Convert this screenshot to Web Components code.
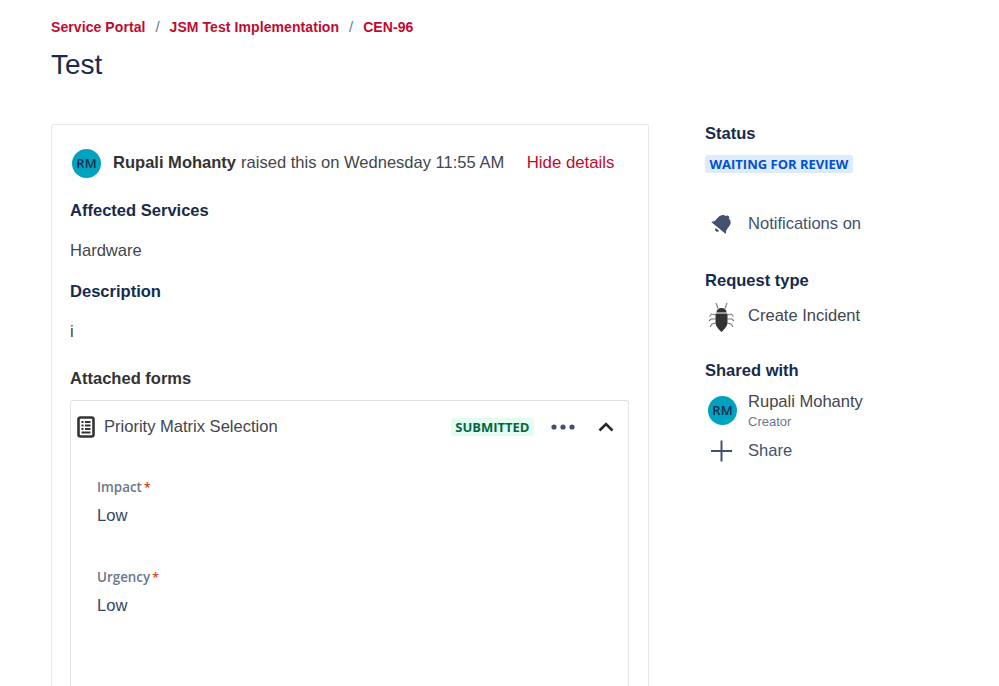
<!DOCTYPE html>
<html>
<head>
<meta charset="utf-8">
<title>Test</title>
<style>
html, body { margin: 0; height: 100%; overflow: hidden; background: #fff; }
body { font-family: "Liberation Sans", Arial, sans-serif; }
</style>
</head>
<body>
<request-page>
  <bread-crumbs slot="crumbs"></bread-crumbs>
  <request-card slot="main">
    <field-block label="Affected Services" value="Hardware"></field-block>
    <field-block label="Description" value="i"></field-block>
    <attached-form></attached-form>
  </request-card>
  <side-panel slot="side"></side-panel>
</request-page>

<script>
const navy = '#172b4d'
const slate = '#42526e'
const crimson = '#bf0a30'
const teal = '#00a3bf'
const bodySize = '16.55px'

class RequestPage extends HTMLElement {
    constructor() {
        super()
        this.attachShadow({mode: 'open'}).innerHTML = `
            <style>
                :host { display: block; padding: 18px 0 0 51px; height: 668px; overflow: hidden; }
                h1 { margin: 0; font: 400 28px/32px "Liberation Sans", sans-serif; color: ${navy}; height: 32px; }
                .title { padding-top: 13px; height: 75px; }
                .columns { display: flex; align-items: flex-start; }
                .main { width: 598px; flex: none; }
                .side { margin-left: 56px; width: 240px; }
            </style>
            <slot name="crumbs"></slot>
            <div class="title"><h1>Test</h1></div>
            <div class="columns">
                <div class="main"><slot name="main"></slot></div>
                <div class="side"><slot name="side"></slot></div>
            </div>
        `
    }
}

class BreadCrumbs extends HTMLElement {
    constructor() {
        super()
        this.attachShadow({mode: 'open'}).innerHTML = `
            <style>
                :host { display: flex; height: 18px; align-items: center; font: 700 14px/18px "Liberation Sans", sans-serif; color: ${crimson}; letter-spacing: .08px; }
                i { font-style: normal; font-weight: 400; font-size: 15px; color: #6b778c; width: 24px; text-align: center; letter-spacing: 0; }
            </style>
            <span>Service Portal</span><i>/</i><span>JSM Test Implementation</span><i>/</i><span>CEN-96</span>
        `
    }
}

class UserAvatar extends HTMLElement {
    constructor() {
        super()
        this.attachShadow({mode: 'open'}).innerHTML = `
            <style>
                :host { display: flex; width: 29px; height: 29px; border-radius: 50%; background: ${teal}; color: ${navy}; align-items: center; justify-content: center; font: 600 13px/1 "Open Sans", sans-serif; flex: none; }
            </style>
            RM
        `
    }
}

class RequestCard extends HTMLElement {
    constructor() {
        super()
        this.attachShadow({mode: 'open'}).innerHTML = `
            <style>
                :host { display: block; box-sizing: border-box; border: 1px solid #e6e8ec; border-bottom: 0; border-radius: 3px 3px 0 0; padding: 23px 19px 0 18px; height: 600px; }
                .head { display: flex; align-items: center; font: ${bodySize}/24px "Liberation Sans", sans-serif; color: #42464d; padding-left: 2px; height: 30px; }
                b { color: #333; margin: 0 5px 0 12px; }
                a { margin-left: 22.500px; color: ${crimson}; font-size: 16.800px; }
                .body { padding-top: 21px; }
            </style>
            <div class="head"><user-avatar></user-avatar><b>Rupali Mohanty</b> raised this on Wednesday 11:55 AM<a>Hide details</a></div>
            <div class="body"><slot></slot></div>
        `
    }
}

class FieldBlock extends HTMLElement {
    constructor() {
        super()
        this.attachShadow({mode: 'open'}).innerHTML = `
            <style>
                :host { display: block; font: ${bodySize}/24px "Liberation Sans", sans-serif; color: #42464d; height: 81px; }
                h3 { margin: 0 0 16px; font: 700 ${bodySize}/24px "Liberation Sans", sans-serif; color: ${navy}; }
            </style>
            <h3>${this.getAttribute('label')}</h3>
            <div>${this.getAttribute('value')}</div>
        `
    }
}

class AttachedForm extends HTMLElement {
    constructor() {
        super()
        this.attachShadow({mode: 'open'}).innerHTML = `
            <style>
                :host { display: block; font-family: "Liberation Sans", sans-serif; padding-top: 6px; }
                h3 { margin: 0 0 9px; font: 700 ${bodySize}/24px "Liberation Sans", sans-serif; color: #333; }
                .box { border: 1px solid #dfe1e6; border-bottom: 0; border-radius: 3px 3px 0 0; height: 320px; }
                .bar { display: flex; align-items: center; height: 52px; padding: 0 14px 0 6px; color: #42464d; font-size: ${bodySize}; }
                .bar svg.doc { margin-right: 9px; }
                .name { flex: 1; }
                .lozenge { font: 700 13px/18px "Open Sans", sans-serif; color: #006644; background: #e3fcef; border-radius: 3px; padding: 0 4.500px; }
                .dots { margin: 0 23px 0 17px; }
                .fields { padding: 24px 26px; }
                .field { height: 90px; }
                label { display: block; font: 600 13.400px/20px "Open Sans", sans-serif; color: #6b778c; }
                label span { color: #de350b; margin-left: 2px; font-size: 12px; }
                .val { font-size: ${bodySize}; line-height: 24px; color: #344563; margin-top: 6px; }
            </style>
            <h3>Attached forms</h3>
            <div class="box">
                <div class="bar">
                    <svg class="doc" width="18" height="22" viewBox="0 0 18 22">
                        <rect x="1.500" y="1.500" width="15" height="19" rx="2" fill="none" stroke="#333" stroke-width="2.600"/>
                        <path d="M4.500 6h2M8 6h5.500M4.500 9.500h2M8 9.500h5.500M4.500 13h2M8 13h5.500M4.500 16.500h9" stroke="#333" stroke-width="1.800"/>
                    </svg>
                    <span class="name">Priority Matrix Selection</span>
                    <span class="lozenge">SUBMITTED</span>
                    <svg class="dots" width="24" height="6" viewBox="0 0 24 6" fill="${slate}"><circle cx="3" cy="3" r="2.600"/><circle cx="12" cy="3" r="2.600"/><circle cx="21" cy="3" r="2.600"/></svg>
                    <svg width="16" height="10" viewBox="0 0 16 10"><path d="M1.500 8.500 8 2l6.500 6.500" fill="none" stroke="#2a2a2a" stroke-width="2.600"/></svg>
                </div>
                <div class="fields">
                    <div class="field"><label>Impact<span>*</span></label><div class="val">Low</div></div>
                    <div class="field"><label>Urgency<span>*</span></label><div class="val">Low</div></div>
                </div>
            </div>
        `
    }
}

class SidePanel extends HTMLElement {
    constructor() {
        super()
        this.attachShadow({mode: 'open'}).innerHTML = `
            <style>
                :host { display: block; font: ${bodySize}/20px "Liberation Sans", sans-serif; color: ${slate}; }
                h4 { margin: 0; font: 700 ${bodySize}/20px "Liberation Sans", sans-serif; color: ${navy}; }
                .lozenge { display: inline-block; font: 700 13px/18px "Open Sans", sans-serif; color: #0052cc; background: #deebff; border-radius: 3px; padding: 0 4.500px; margin-top: 11px; }
                .row { display: flex; align-items: center; }
                .ico { width: 43px; flex: none; display: flex; padding-left: 3px; box-sizing: border-box; }
                .status { height: 85px; }
                .notify { height: 30px; margin: 0 0 32px; }
                .type { margin-top: 10px; height: 30px; color: #42464d; }
                .shared { margin-top: 30px; }
                .person { margin-top: 9px; height: 40px; }
                .person .who { padding-top: 2px; }
                .person small { display: block; font-size: 13px; line-height: 16px; color: #6b778c; margin-top: 2px; }
                .person span { color: #42464d; display: block; line-height: 20px; }
                .share { margin-top: 6px; height: 30px; }
            </style>
            <div class="status"><h4>Status</h4><span class="lozenge">WAITING FOR REVIEW</span></div>
            <div class="row notify">
                <div class="ico"><svg width="24" height="24" viewBox="0 0 24 24" style="overflow: visible"><g transform="translate(10.500 16) rotate(40)" fill="${slate}">
                    <path d="M-9.500 0L-7.500 -3L-7 -9Q-6.500 -13.500 -1.500 -14L-1.500 -15.500H1.500L1.500 -14Q6.500 -13.500 7 -9L7.500 -3L9.500 0Z"/>
                    <path d="M-2.300 1.800a2.300 2.300 0 0 0 4.600 0z"/>
                </g></svg></div>
                <span>Notifications on</span>
            </div>
            <h4>Request type</h4>
            <div class="row type">
                <div class="ico"><svg width="27" height="32" viewBox="0 0 27 32" style="margin: -1px 0">
                    <path d="M8.500 12.500c0-3 2-4.500 5-4.500s5 1.500 5 4.500z" fill="#333"/>
                    <path d="M7.500 13.500h12v9c0 4-4 7.500-6 9.500-2-2-6-5.500-6-9.500z" fill="#333"/>
                    <path d="M8 3l2 5.500M19 3l-2 5.500M8 15 3.500 14 1.500 16.500M19 15l4.500-1 2 2.500M8 19H3L1 21M19 19h5l2 2M8 23l-4 1-2 3M19 23l4 1 2 3" fill="none" stroke="#777" stroke-width="1.100"/>
                </svg></div>
                <span>Create Incident</span>
            </div>
            <div class="shared">
                <h4>Shared with</h4>
                <div class="row person">
                    <div class="ico"><user-avatar></user-avatar></div>
                    <div class="who"><span>Rupali Mohanty</span><small>Creator</small></div>
                </div>
                <div class="row share">
                    <div class="ico"><svg width="26" height="24" viewBox="0 0 26 24"><path d="M13.500 1.500v21M3 12h21" stroke="${slate}" stroke-width="2"/></svg></div>
                    <span>Share</span>
                </div>
            </div>
        `
    }
}

customElements.define('user-avatar', UserAvatar)
customElements.define('request-page', RequestPage)
customElements.define('bread-crumbs', BreadCrumbs)
customElements.define('request-card', RequestCard)
customElements.define('field-block', FieldBlock)
customElements.define('attached-form', AttachedForm)
customElements.define('side-panel', SidePanel)
</script>
</body>
</html>
